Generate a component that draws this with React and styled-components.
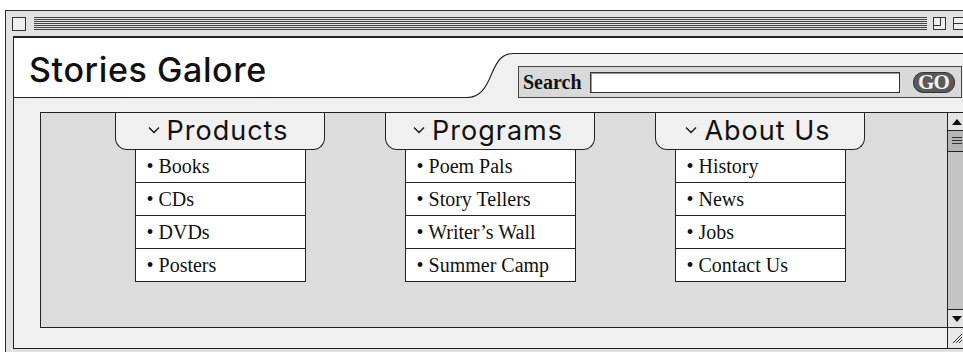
import React from "react";
import styled, { createGlobalStyle } from "styled-components";

const GlobalStyle = createGlobalStyle`
    html, body {
        margin: 0;
        padding: 0;
        background: #ffffff;
        overflow: hidden;
    }
`

const sans = `Inter, "Noto Sans", "Liberation Sans", sans-serif`
const serif = `"Liberation Serif", "Times New Roman", serif`

const Window = styled.div`
    margin: 10px 0 0 5px;
    width: 980px;
    height: 342px;
    overflow: hidden;
    border: 1px solid #2a2a2a;
    border-bottom: none;
    background: #e2e2e2;
    box-sizing: border-box;
`

const TitleBar = styled.div`
    height: 25px;
    display: flex;
    align-items: center;
    padding-left: 6px;
    gap: 8px;
`

const CloseBox = styled.div`
    width: 12px;
    height: 12px;
    border: 1px solid #333;
    background: #eeeeee;
`

const Stripes = styled.div`
    width: 893px;
    height: 13px;
    background: repeating-linear-gradient(
        to bottom,
        #444 0px,
        #444 1px,
        #e2e2e2 1px,
        #e2e2e2 2px
    );
`

const TitleIcons = styled.div`
    display: flex;
    gap: 7px;
    margin-left: -2px;
`

const ZoomBox = styled.div`
    width: 11px;
    height: 11px;
    border: 1px solid #333;
    background: #eeeeee;
    position: relative;

    &::after {
        content: "";
        position: absolute;
        left: 0;
        top: 0;
        width: 6px;
        height: 7px;
        border-right: 1px solid #333;
        border-bottom: 1px solid #333;
    }
`

const ShadeBox = styled.div`
    width: 12px;
    height: 11px;
    border: 1px solid #333;
    background: #eeeeee;
    position: relative;

    &::after {
        content: "";
        position: absolute;
        left: 0;
        right: 0;
        top: 5px;
        border-top: 1px solid #333;
    }
`

const Frame = styled.div`
    margin-left: 7px;
    border-top: 2px solid #222;
    border-left: 1px solid #222;
    border-bottom: 1px solid #222;
    background: #f0f0f0;
`

const Header = styled.div`
    display: flex;
    height: 60px;
`

const Brand = styled.div`
    width: 453px;
    background: #ffffff;
    border-bottom: 1px solid #222;
    box-sizing: border-box;
    display: flex;
    align-items: center;
    padding-left: 15px;
    padding-top: 3px;
`

const BrandName = styled.h1`
    margin: 0;
    font-family: ${sans};
    font-weight: 500;
    font-size: 34px;
    letter-spacing: 0.6px;
    color: #111;
`

const Curve = styled.svg`
    display: block;
    flex: none;
`

const SearchArea = styled.div`
    flex: 1;
    display: flex;
    flex-direction: column;
`

const TopStrip = styled.div`
    height: 15px;
    background: #ffffff;
    border-bottom: 1px solid #222;
`

const SearchBox = styled.form`
    margin: 12px 0 0 5px;
    height: 32px;
    width: 444px;
    box-sizing: border-box;
    border: 1px solid #444;
    background: #d9d9d9;
    display: flex;
    align-items: center;
    padding: 0 0 0 4px;
    gap: 8px;
`

const SearchLabel = styled.label`
    font-family: ${serif};
    font-weight: bold;
    font-size: 20px;
    color: #111;
`

const SearchInput = styled.div`
    width: 308px;
    height: 19px;
    background: #fff;
    border: 1px solid #333;
    box-shadow: inset 1px 1px 0 #999;
`

const GoButton = styled.div`
    width: 42px;
    height: 21px;
    margin-left: 5px;
    border-radius: 10px;
    background: #5a5a5a;
    border: 1px solid #333;
    box-sizing: border-box;
    display: flex;
    align-items: center;
    justify-content: center;
    font-family: ${serif};
    font-weight: bold;
    font-size: 21px;
    color: #f2f2f2;
    letter-spacing: -0.8px;
`

const Body = styled.div`
    display: flex;
`

const Main = styled.div`
    width: 933px;
    box-sizing: border-box;
    padding: 14px 0 20px 26px;
`

const Panel = styled.div`
    height: 214px;
    border-top: 1px solid #222;
    border-left: 1px solid #222;
    border-bottom: 1px solid #222;
    background: #dcdcdc;
    display: flex;
    gap: 60px;
    padding-left: 74px;
`

const Menu = styled.div`
    width: 210px;
    display: flex;
    flex-direction: column;
    align-items: center;
`

const Tab = styled.div`
    width: 210px;
    height: 37px;
    box-sizing: border-box;
    background: #f0f0f0;
    border: 1px solid #222;
    border-top: none;
    border-radius: 0 0 12px 12px;
    display: flex;
    align-items: center;
    justify-content: center;
    gap: 7px;
    font-family: ${sans};
    font-size: 27px;
    font-weight: 400;
    letter-spacing: 1px;
    color: #111;
    padding: 0 4px 2px 0;
`

const List = styled.ul`
    list-style: none;
    margin: 0;
    padding: 0;
    width: 171px;
    box-sizing: border-box;
    border: 1px solid #222;
    border-top: none;
    background: #fff;
`

const Item = styled.li`
    height: 32px;
    display: flex;
    align-items: center;
    padding-left: 11px;
    font-family: ${serif};
    font-size: 20px;
    color: #111;
    border-top: ${p => (p.$first ? "none" : "1px solid #222")};
`

const ScrollCol = styled.div`
    width: 18px;
    margin-top: 14px;
    border-left: 1px solid #222;
    display: flex;
    flex-direction: column;
`

const Track = styled.div`
    height: 214px;
    border-top: 1px solid #222;
    border-bottom: 1px solid #222;
    background: #c4c4c4;
    display: flex;
    flex-direction: column;
`

const ArrowBox = styled.div`
    height: 17px;
    background: #e4e4e4;
    display: flex;
    align-items: center;
    justify-content: center;
    border-${p => (p.$down ? "top" : "bottom")}: 1px solid #222;
`

const Thumb = styled.div`
    height: 20px;
    background: #b4b4b4;
    border-bottom: 1px solid #222;
    display: flex;
    align-items: center;
    justify-content: center;
`

const Gap = styled.div`
    flex: 1;
`

const Grip = styled.div`
    height: 20px;
    background: #e8e8e8;
    display: flex;
    align-items: center;
    justify-content: center;
`

const Chevron = () => (
    <svg width="12" height="8" viewBox="0 0 12 8">
        <polyline points="1,1.5 6,6.5 11,1.5" fill="none" stroke="#111" strokeWidth="1.3" />
    </svg>
)

const menus = [
    { title: "Products", items: ["Books", "CDs", "DVDs", "Posters"] },
    { title: "Programs", items: ["Poem Pals", "Story Tellers", "Writer\u2019s Wall", "Summer Camp"] },
    { title: "About Us", items: ["History", "News", "Jobs", "Contact Us"] },
]

export default function App() {
    return (
        <>
            <GlobalStyle />
            <Window>
                <TitleBar>
                    <CloseBox />
                    <Stripes />
                    <TitleIcons>
                        <ZoomBox />
                        <ShadeBox />
                    </TitleIcons>
                </TitleBar>
                <Frame>
                    <Header>
                        <Brand>
                            <BrandName>Stories Galore</BrandName>
                        </Brand>
                        <Curve width="46" height="60" viewBox="0 0 46 60">
                            <path d="M0 0 H46 V15.5 C36 15.5 31 21 25 35 C19 50 13 59.5 0 59.5 Z" fill="#fff" />
                            <path d="M46 15.5 C36 15.5 31 21 25 35 C19 50 13 59.5 0 59.5" fill="none" stroke="#222" strokeWidth="1.1" />
                        </Curve>
                        <SearchArea>
                            <TopStrip />
                            <SearchBox onSubmit={e => e.preventDefault()}>
                                <SearchLabel>Search</SearchLabel>
                                <SearchInput />
                                <GoButton>GO</GoButton>
                            </SearchBox>
                        </SearchArea>
                    </Header>
                    <Body>
                        <Main>
                            <Panel>
                                {menus.map(menu => (
                                    <Menu key={menu.title}>
                                        <Tab>
                                            <Chevron />
                                            {menu.title}
                                        </Tab>
                                        <List>
                                            {menu.items.map((item, i) => (
                                                <Item key={item} $first={i === 0}>• {item}</Item>
                                            ))}
                                        </List>
                                    </Menu>
                                ))}
                            </Panel>
                        </Main>
                        <ScrollCol>
                            <Track>
                                <ArrowBox>
                                    <svg width="10" height="6" viewBox="0 0 10 6"><polygon points="0,6 5,0 10,6" fill="#111" /></svg>
                                </ArrowBox>
                                <Thumb>
                                    <svg width="10" height="9" viewBox="0 0 10 9">
                                        <path d="M0 0.5 H10 M0 3.5 H10 M0 6.5 H10" stroke="#333" strokeWidth="1" />
                                    </svg>
                                </Thumb>
                                <Gap />
                                <ArrowBox $down>
                                    <svg width="10" height="6" viewBox="0 0 10 6"><polygon points="0,0 10,0 5,6" fill="#111" /></svg>
                                </ArrowBox>
                            </Track>
                            <Grip>
                                <svg width="12" height="12" viewBox="0 0 12 12">
                                    <path d="M2 11 L11 2 M5 11 L11 5 M8 11 L11 8" stroke="#333" strokeWidth="1" />
                                </svg>
                            </Grip>
                        </ScrollCol>
                    </Body>
                </Frame>
            </Window>
        </>
    )
}
